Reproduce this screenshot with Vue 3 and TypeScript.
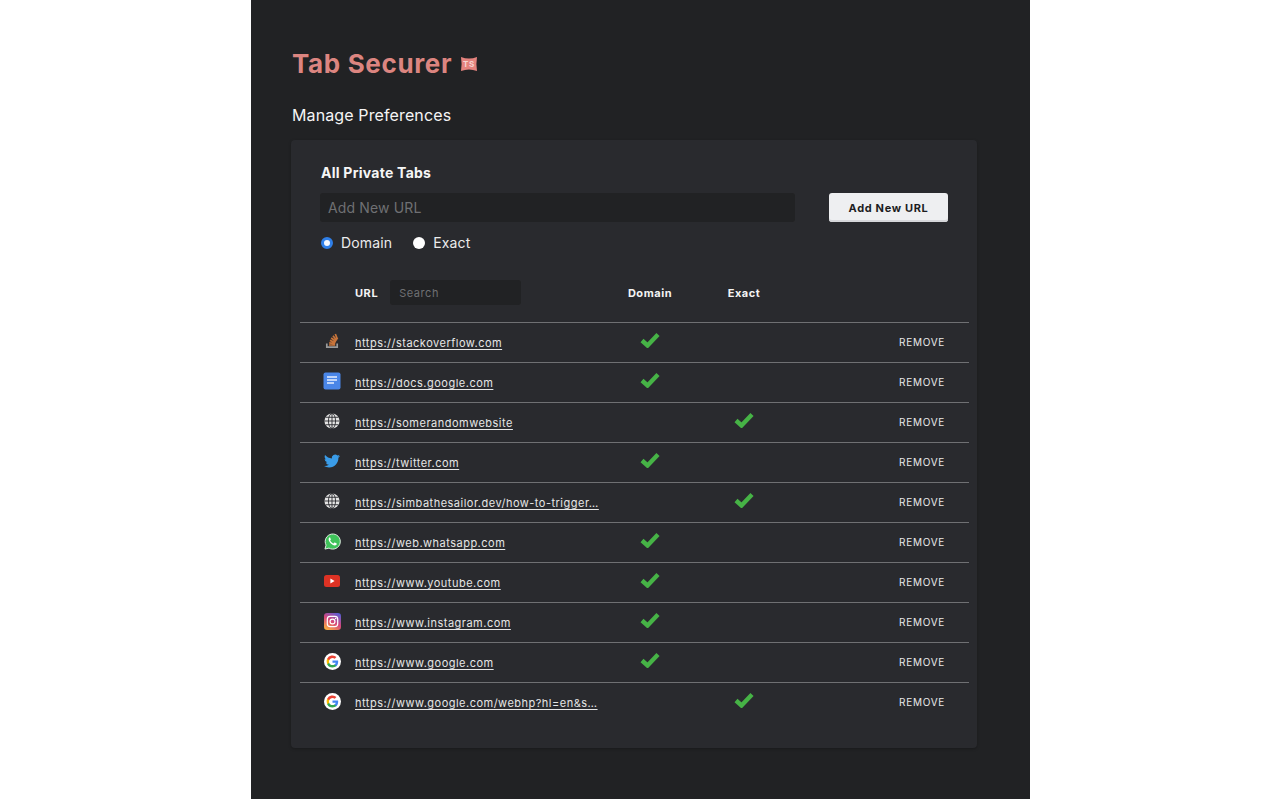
<script setup lang="ts">
type IconName = 'so' | 'docs' | 'globe' | 'twitter' | 'whatsapp' | 'youtube' | 'instagram' | 'google'
interface Row { url: string; icon: IconName; mode: 'domain' | 'exact' }
const rows: Row[] = [
  { url: 'https://stackoverflow.com', icon: 'so', mode: 'domain' },
  { url: 'https://docs.google.com', icon: 'docs', mode: 'domain' },
  { url: 'https://somerandomwebsite', icon: 'globe', mode: 'exact' },
  { url: 'https://twitter.com', icon: 'twitter', mode: 'domain' },
  { url: 'https://simbathesailor.dev/how-to-trigger…', icon: 'globe', mode: 'exact' },
  { url: 'https://web.whatsapp.com', icon: 'whatsapp', mode: 'domain' },
  { url: 'https://www.youtube.com', icon: 'youtube', mode: 'domain' },
  { url: 'https://www.instagram.com', icon: 'instagram', mode: 'domain' },
  { url: 'https://www.google.com', icon: 'google', mode: 'domain' },
  { url: 'https://www.google.com/webhp?hl=en&s…', icon: 'google', mode: 'exact' },
]
</script>

<template>
  <div class="page">
    <main class="panel">
      <h1 class="title">
        Tab Securer
        <svg class="logo" viewBox="0 0 16 14" width="16" height="14">
          <path d="M0 0 Q8 3 16 0 Q14.800 7 16 14 Q8 11 0 14 Q1.200 7 0 0 Z" fill="#e5837e" />
          <text x="8" y="10.200" text-anchor="middle" font-size="8" fill="#f7d5d2" font-family="Inter, sans-serif">TS</text>
        </svg>
      </h1>
      <h2 class="subtitle">Manage Preferences</h2>
      <section class="card">
        <h3 class="card-title">All Private Tabs</h3>
        <div class="add-row">
          <input class="url-input" placeholder="Add New URL" />
          <button class="add-btn">Add New URL</button>
        </div>
        <div class="radios">
          <label class="radio"><span class="dot on"></span>Domain</label>
          <label class="radio"><span class="dot"></span>Exact</label>
        </div>
        <div class="table">
          <div class="grid head">
            <span></span>
            <div class="url-head"><b>URL</b><input class="search" placeholder="Search" /></div>
            <b class="center">Domain</b>
            <b class="center">Exact</b>
            <span></span>
          </div>
          <div v-for="(r, i) in rows" :key="i" class="grid row">
            <div class="icon">
              <svg v-if="r.icon === 'so'" viewBox="0 0 18 18" width="18" height="18">
                <path d="M3.800 11.500v3.700h10.400v-3.700" fill="none" stroke="#9a9a9a" stroke-width="1.700" />
                <path d="M6 13h6.200M6.200 10.800l6 .9M6.900 8.400l5.600 2.300M8.200 6l4.900 3.500M10 3.800l3.700 4.700M12.300 2l2.200 5.400" stroke="#c8743a" stroke-width="1.700" fill="none" />
              </svg>
              <svg v-else-if="r.icon === 'docs'" viewBox="0 0 18 18" width="18" height="18">
                <rect x="0.500" y="0.500" width="17" height="17" rx="2" fill="#4a86e8" />
                <path d="M4 5h10M4 8h10M4 11h7" stroke="#e8f0fe" stroke-width="1.500" />
              </svg>
              <svg v-else-if="r.icon === 'globe'" viewBox="0 0 18 18" width="16" height="16">
                <circle cx="9" cy="9" r="8.500" fill="#e4e4e4" />
                <g fill="none" stroke="#292a2e" stroke-width="1">
                  <ellipse cx="9" cy="9" rx="4" ry="8.500" />
                  <path d="M9 .5v17M.5 9h17M1.800 4.800h14.400M1.800 13.200h14.400" />
                </g>
              </svg>
              <svg v-else-if="r.icon === 'twitter'" viewBox="0 0 24 24" width="16" height="16">
                <path fill="#3a9ce8" d="M23.950 4.570a10 10 0 0 1-2.820.77 4.960 4.960 0 0 0 2.160-2.720c-.95.550-2 .95-3.130 1.180a4.920 4.920 0 0 0-8.380 4.480C7.690 8.090 4.070 6.130 1.640 3.160a4.820 4.820 0 0 0-.67 2.480c0 1.710.87 3.210 2.190 4.100a4.900 4.900 0 0 1-2.230-.62v.06a4.920 4.920 0 0 0 3.950 4.830 5 5 0 0 1-2.210.08 4.940 4.940 0 0 0 4.600 3.420A9.870 9.870 0 0 1 0 19.540a14 14 0 0 0 7.560 2.210c9.050 0 14-7.500 14-13.980 0-.21 0-.42-.02-.63A9.940 9.940 0 0 0 24 4.590z" />
              </svg>
              <svg v-else-if="r.icon === 'whatsapp'" viewBox="0 0 18 18" width="17" height="17">
                <path fill="#3fc35a" stroke="#e8f5ea" stroke-width="1" d="M1 17l1.200-4.200A8 8 0 1 1 5.300 16z" />
                <path fill="#fff" d="M6.300 4.600c-.5 0-1.400.8-1.400 2.100 0 2.700 3.600 6.500 6.500 6.500 1.300 0 2.100-1 2.100-1.600 0-.5-.1-.7-.4-.8l-1.600-.8c-.3-.1-.5 0-.7.200l-.6.800c-.2.200-.4.200-.6.100-1.300-.6-2.300-1.500-3-2.800-.1-.2 0-.4.100-.5l.5-.7c.1-.2.100-.4 0-.6l-.6-1.500c-.1-.3-.3-.4-.6-.4z" />
              </svg>
              <svg v-else-if="r.icon === 'youtube'" viewBox="0 0 16 12" width="16" height="12">
                <rect width="16" height="12" rx="2.500" fill="#dd3224" />
                <path d="M6.400 3.500v5l4.200-2.500z" fill="#fff" />
              </svg>
              <svg v-else-if="r.icon === 'instagram'" viewBox="0 0 18 18" width="17" height="17">
                <defs>
                  <linearGradient id="ig" x1=".2" y1="1" x2=".8" y2="0">
                    <stop offset="0" stop-color="#fbb040" />
                    <stop offset=".5" stop-color="#d6477b" />
                    <stop offset="1" stop-color="#5b5fd6" />
                  </linearGradient>
                </defs>
                <rect width="18" height="18" rx="3.500" fill="url(#ig)" />
                <rect x="3.500" y="3.500" width="11" height="11" rx="3" fill="none" stroke="#fff" stroke-width="1.300" />
                <circle cx="9" cy="9" r="2.600" fill="none" stroke="#fff" stroke-width="1.300" />
                <circle cx="12.300" cy="5.700" r=".8" fill="#fff" />
              </svg>
              <svg v-else viewBox="0 0 18 18" width="17" height="17">
                <circle cx="9" cy="9" r="9" fill="#fff" />
                <path fill="#4285f4" d="M15 9.200c0-.5 0-.9-.1-1.300H9v2.500h3.400c-.1.800-.6 1.500-1.300 1.900v1.600h2.100c1.200-1.100 1.800-2.800 1.800-4.700z" />
                <path fill="#34a853" d="M9 15.300c1.700 0 3.100-.6 4.200-1.500l-2.100-1.600c-.6.400-1.300.6-2.100.6-1.600 0-3-1.100-3.500-2.600H3.300v1.600A6.300 6.300 0 0 0 9 15.300z" />
                <path fill="#fbbc05" d="M5.500 10.200a3.800 3.800 0 0 1 0-2.400V6.200H3.300a6.300 6.300 0 0 0 0 5.600z" />
                <path fill="#ea4335" d="M9 5.200c.9 0 1.800.3 2.400.9l1.800-1.800A6.300 6.300 0 0 0 3.300 6.200l2.200 1.600C6 6.300 7.400 5.200 9 5.200z" />
              </svg>
            </div>
            <a class="link" href="#" @click.prevent>{{ r.url }}</a>
            <div class="center check-cell">
              <svg v-if="r.mode === 'domain'" class="check" viewBox="0 0 20 16" width="20" height="16">
                <path d="M2 8.500l5.500 5L18 2.500" fill="none" stroke="#46b346" stroke-width="4.400" />
              </svg>
            </div>
            <div class="center check-cell">
              <svg v-if="r.mode === 'exact'" class="check" viewBox="0 0 20 16" width="20" height="16">
                <path d="M2 8.500l5.500 5L18 2.500" fill="none" stroke="#46b346" stroke-width="4.400" />
              </svg>
            </div>
            <button class="remove">REMOVE</button>
          </div>
        </div>
      </section>
    </main>
  </div>
</template>

<style>
html, body { margin: 0; background: #fff; }
</style>

<style scoped>
.page {
  height: 800px;
  overflow: hidden;
  display: flex;
  justify-content: flex-start;
  padding-left: 251px;
  font-family: Inter, "Liberation Sans", sans-serif;
  color: #f2f2f2;
}
.panel {
  width: 779px;
  height: 799px;
  box-sizing: border-box;
  background: #212224;
  padding: 47px 53px 0 40px;
}
.title {
  margin: 0;
  display: flex;
  align-items: center;
  gap: 9px;
  font-size: 26px;
  line-height: 34px;
  font-weight: 700;
  letter-spacing: .64px;
  color: #dc8580;
  padding-left: 1px;
}
.logo { margin-top: -1px; }
.subtitle {
  margin: 22px 0 0;
  font-size: 16px;
  line-height: 24px;
  font-weight: 400;
  letter-spacing: .12px;
  color: #f5f5f5;
  padding-left: 1px;
}
.card {
  margin-top: 13px;
  height: 608px;
  box-sizing: border-box;
  background: #292a2e;
  border-radius: 4px;
  padding: 23px 8px 0 9px;
  box-shadow: 0 1px 3px rgba(0,0,0,.25);
}
.card-title {
  margin: 0 0 0 21px;
  font-size: 14px;
  line-height: 20px;
  font-weight: 700;
  letter-spacing: .25px;
  color: #f6f6f6;
}
.add-row {
  margin: 10px 21px 0 20px;
  display: flex;
  justify-content: space-between;
}
.url-input, .search {
  border: 0;
  outline: 0;
  box-sizing: border-box;
  background: #212224;
  border-radius: 3px;
  color: #eee;
  font-family: inherit;
}
.url-input::placeholder, .search::placeholder { color: #6f7073; opacity: 1; }
.url-input {
  width: 475px;
  height: 29px;
  padding: 0 8px;
  font-size: 14px;
  letter-spacing: .15px;
}
.add-btn {
  width: 119px;
  height: 29px;
  border: 0;
  border-radius: 3px;
  background: #eeeff1;
  box-shadow: inset 0 -2px 0 #d6d7da;
  color: #1d1d1f;
  font-family: inherit;
  font-size: 11px;
  font-weight: 700;
  letter-spacing: .65px;
  padding: 0;
}
.radios {
  margin: 10px 0 0 21px;
  display: flex;
  gap: 21px;
}
.radio {
  display: flex;
  align-items: center;
  gap: 8px;
  height: 20px;
  font-size: 14px;
  letter-spacing: .15px;
  color: #ececec;
}
.dot {
  width: 12px;
  height: 12px;
  border-radius: 50%;
  background: #fff;
  box-sizing: border-box;
  margin-top: 1px;
}
.dot.on { border: 3px solid #2f7fe8; background: #f4f8ff; }
.grid {
  display: grid;
  grid-template-columns: 55px 245px 100px 88px 1fr;
  align-items: center;
}
.table { margin-top: 11px; }
.head {
  height: 59px;
  font-size: 11px;
  letter-spacing: .55px;
  color: #f4f4f4;
}
.head b { font-weight: 700; }
.url-head { display: flex; align-items: center; gap: 12px; }
.search {
  width: 131px;
  height: 25px;
  padding: 0 9px;
  font-size: 11px;
  letter-spacing: .55px;
}
.center { text-align: center; }
.row {
  height: 40px;
  border-top: 1px solid #6f7073;
  box-sizing: border-box;
}
.icon {
  display: flex;
  justify-content: center;
  padding-left: 9px;
  margin-top: -3px;
  height: 18px;
  align-items: center;
}
.link {
  color: #e6e6e6;
  font-size: 11px;
  letter-spacing: .49px;
  text-decoration: underline;
  text-underline-offset: 2px;
  white-space: nowrap;
  display: block;
  margin-top: 1px;
}
.check-cell { height: 18px; margin-top: -3px; }
.check { display: inline-block; }
.remove {
  justify-self: end;
  margin-right: 24px;
  margin-top: -1px;
  background: none;
  border: 0;
  padding: 0;
  color: #e8e8e8;
  font-family: inherit;
  font-size: 10px;
  letter-spacing: .7px;
}
</style>
